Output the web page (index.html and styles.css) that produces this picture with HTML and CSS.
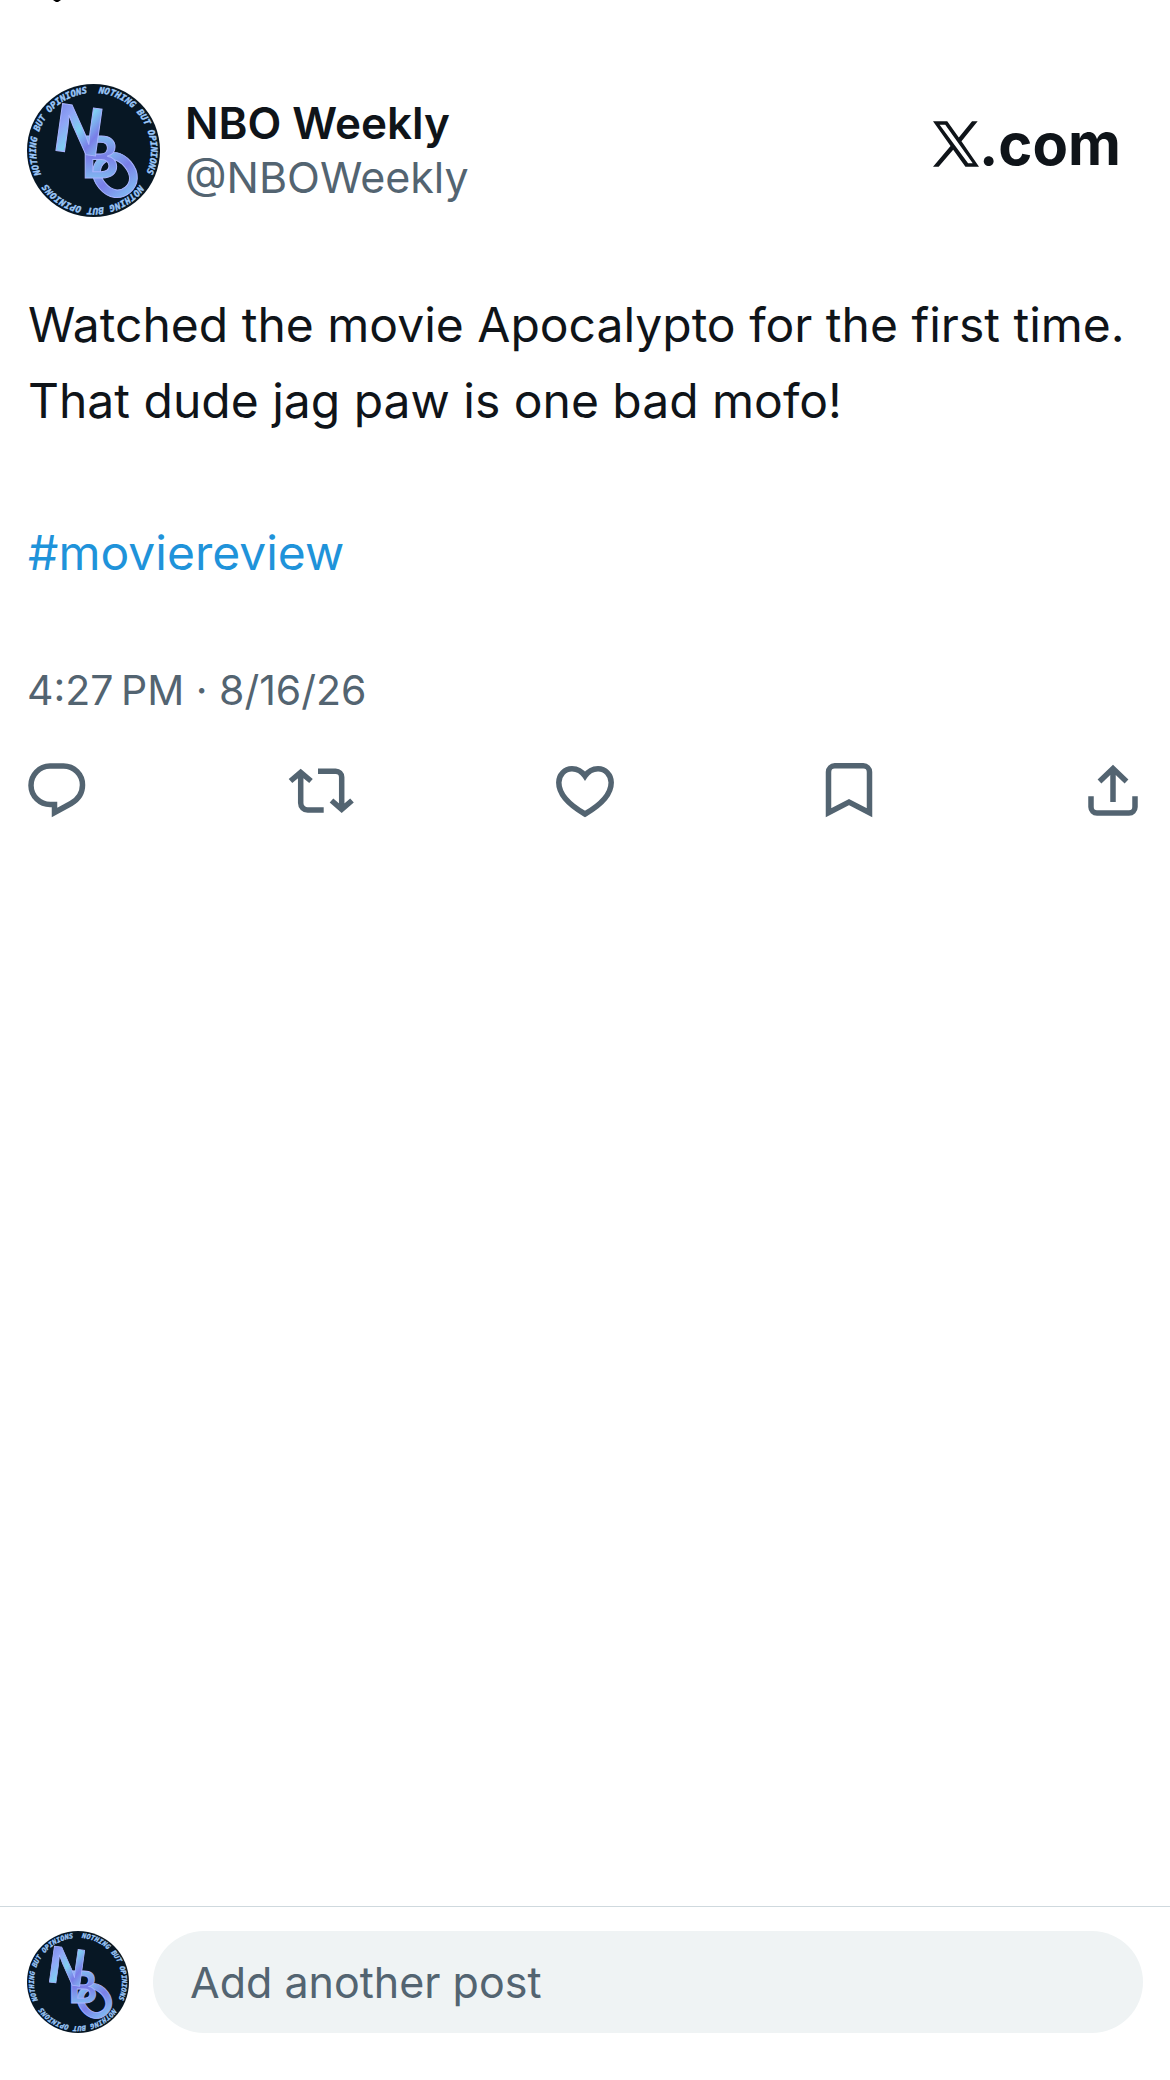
FILE: index.html
```
<!DOCTYPE html>
<html lang="en">
<head>
  <meta charset="UTF-8">
  <meta name="viewport" content="width=device-width, initial-scale=1.0">
  <title>NBO Weekly - Post</title>
  <link rel="stylesheet" href="styles.css">
</head>
<body>
  <!-- shared avatar artwork -->
  <svg class="defs" width="0" height="0" aria-hidden="true">
    <defs>
      <linearGradient id="ribbon" x1="0" y1="0" x2="1" y2="1">
        <stop offset="0" stop-color="#6f78e0"/>
        <stop offset="0.3" stop-color="#8fa4f6"/>
        <stop offset="0.5" stop-color="#7fd0f2"/>
        <stop offset="0.7" stop-color="#7a7ee8"/>
        <stop offset="1" stop-color="#86e4f4"/>
      </linearGradient>
      <linearGradient id="ribbon-loop" x1="0" y1="0" x2="0" y2="1">
        <stop offset="0" stop-color="#86e4f4"/>
        <stop offset="0.5" stop-color="#7a7ee8"/>
        <stop offset="1" stop-color="#84dcf6"/>
      </linearGradient>
      <path id="ring" d="M66.500 9a57.500 57.500 0 0 1 0 115a57.500 57.500 0 0 1 0-115"/>
      <symbol id="avatar" viewBox="0 0 133 133">
        <circle cx="66.500" cy="66.500" r="66.500" fill="#071724"/>
        <g class="ring-text">
          <text><textPath href="#ring" startOffset="5">NOTHING BUT OPINIONS</textPath></text>
          <text><textPath href="#ring" startOffset="127">NOTHING BUT OPINIONS</textPath></text>
          <text><textPath href="#ring" startOffset="246">NOTHING BUT OPINIONS</textPath></text>
        </g>
        <g class="monogram">
          <text x="88" y="91" font-size="62" fill="url(#ribbon-loop)" transform="rotate(-40 88 91)">O</text>
          <text x="73" y="73" font-size="58" fill="url(#ribbon-loop)">B</text>
          <text x="52" y="46" font-size="65" fill="url(#ribbon)" transform="rotate(8 52 46)">N</text>
        </g>
      </symbol>
    </defs>
  </svg>

  <div class="topbar">
    <svg class="chevron" viewBox="0 0 60 3" aria-hidden="true"><path d="M26 0h8l-3 2h-2z"/></svg>
  </div>

  <main class="post">
    <header class="post-header">
      <svg class="avatar" role="img" aria-label="NBO Weekly"><use href="#avatar"/></svg>
      <div class="author">
        <div class="name">NBO Weekly</div>
        <div class="handle">@NBOWeekly</div>
      </div>
      <div class="brand">
        <svg class="x-logo" viewBox="0 0 139 138" role="img" aria-label="X">
          <path fill-rule="evenodd" d="M0 0H43L78 49L118 0H135L86 61L139 138H98L61 86L17 138H0L53 75ZM20 11L106 127H120L37 11Z"/>
        </svg>
        <span>.com</span>
      </div>
    </header>

    <div class="post-text">
      <p>Watched the movie Apocalypto for the first time. That dude jag paw is one bad mofo!</p>
      <p><a href="#moviereview">#moviereview</a></p>
    </div>

    <div class="post-time">4:27&#8239;PM · 8/16/26</div>

    <div class="actions">
      <button type="button" aria-label="Reply">
        <svg viewBox="-30 -30 60 60"><path d="M-7-24H6.500A19 19 0 0 1 25.500-5C25.500 3 21 9.500 14 13.500L-2.500 22.500V14.500H-6.500A19.250 19.250 0 0 1-7-24Z"/></svg>
      </button>
      <button type="button" aria-label="Repost">
        <svg viewBox="-30 -30 60 60"><path d="M-30.500-9L-20.300-17.700L-10-9M-20.300-17V13a7 7 0 0 0 7 7H2.700M-3-18.700H14.700a6 6 0 0 1 6 6V19M10.500 10.500L20.700 19.400L31 10.500"/></svg>
      </button>
      <button type="button" aria-label="Like">
        <svg viewBox="-30 -30 60 60"><path d="M0-14C-3-18.500-8-21.300-13-21.300C-20.500-21.300-26.200-15-26.200-7.500C-26.200 6-13 16.500 0 24C13 16.500 26.200 6 26.200-7.500C26.200-15 20.500-21.300 13-21.300C8-21.300 3-18.500 0-14Z"/></svg>
      </button>
      <button type="button" aria-label="Bookmark">
        <svg viewBox="-30 -30 60 60"><path d="M-20.500 22.800V-18a6.200 6.200 0 0 1 6.200-6.200H14.300a6.200 6.200 0 0 1 6.200 6.200V22.800L0 12Z"/></svg>
      </button>
      <button type="button" aria-label="Share">
        <svg viewBox="-30 -30 60 60"><path d="M-13.500-8.500L0-21.500L13.500-8.500M0-21V12M-22 6.300V17a6 6 0 0 0 6 6H16a6 6 0 0 0 6-6V6.300"/></svg>
      </button>
    </div>
  </main>

  <form class="composer">
    <svg class="avatar avatar-small" aria-hidden="true"><use href="#avatar"/></svg>
    <input type="text" name="post" placeholder="Add another post" aria-label="Add another post">
  </form>
</body>
</html>
```
FILE: styles.css
```
* {
  box-sizing: border-box;
}

body {
  margin: 0;
  min-height: 100vh;
  display: flex;
  flex-direction: column;
  background-color: #fff;
  color: #0f1419;
  font-family: Inter, "Liberation Sans", sans-serif;
}

.defs {
  position: absolute;
}

.topbar {
  height: 84px;
  padding: 0 27px;
}

.chevron {
  display: block;
  width: 60px;
  height: 3px;
}

.post {
  flex: 1;
  padding: 0 27px;
}

.post-header {
  display: flex;
  align-items: center;
}

.avatar {
  flex: none;
  width: 133px;
  height: 133px;
}

.avatar-small {
  width: 102px;
  height: 102px;
}

.ring-text {
  font: italic bold 9px "DejaVu Sans Mono", monospace;
  fill: #9cc8fb;
  stroke: #9cc8fb;
  stroke-width: 0.4px;
}

.monogram {
  font-family: Inter, sans-serif;
  font-weight: 600;
  text-anchor: middle;
  dominant-baseline: central;
  stroke: #a9b4ff;
  stroke-width: 1px;
}

.author {
  flex: 1;
  margin: 0 0 2px 25px;
  line-height: 54px;
}

.name {
  font-size: 44px;
  font-weight: 600;
}

.handle {
  color: #536471;
  font-size: 43px;
}

.brand {
  display: flex;
  align-items: center;
  margin: 0 22px 14px 0;
  font-size: 58px;
  line-height: 72px;
  font-weight: 700;
}

.x-logo {
  width: 46px;
  height: 46px;
  fill: #0f1419;
}

.post-text {
  margin-top: 70px;
  padding-left: 1px;
  font-size: 48px;
  line-height: 76px;
}

.post-text p {
  margin: 0 0 76px;
}

.post-text a {
  color: #1f93da;
  text-decoration: none;
}

.post-time {
  margin-top: -4px;
  color: #536471;
  font-size: 41px;
  line-height: 54px;
}

.actions {
  display: flex;
  justify-content: space-between;
  margin-top: 43px;
}

.actions button {
  width: 60px;
  height: 60px;
  padding: 0;
  border: none;
  background: none;
  cursor: pointer;
}

.actions svg {
  display: block;
  width: 60px;
  height: 60px;
  overflow: visible;
  fill: none;
  stroke: #536471;
  stroke-width: 5.5;
}

.composer {
  display: flex;
  align-items: center;
  gap: 24px;
  padding: 24px 27px 47px;
  border-top: 1px solid #cfd9de;
}

.composer input {
  flex: 1;
  min-width: 0;
  height: 102px;
  padding: 0 37px;
  border: none;
  border-radius: 51px;
  background-color: #eff3f4;
  color: #0f1419;
  font-family: inherit;
  font-size: 43px;
}

.composer input::placeholder {
  color: #536471;
  opacity: 1;
}
```
